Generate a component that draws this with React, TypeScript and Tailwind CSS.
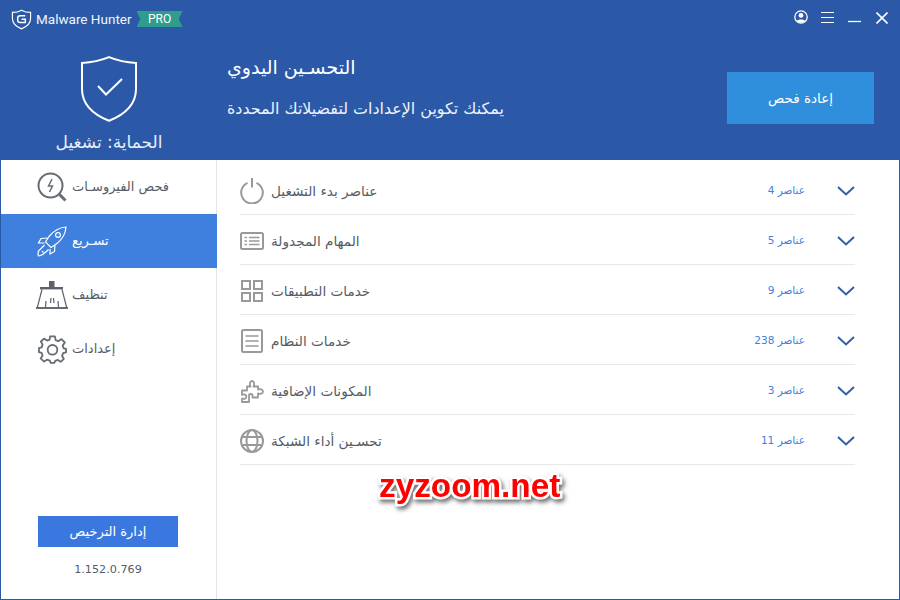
const AR = "font-['DejaVu_Sans',Tahoma,sans-serif]";

function LogoG() {
  return (
    <svg width="21" height="21" viewBox="0 0 22 22" fill="none" stroke="#fff">
      <path d="M11 1.2 C14 3 17 3.6 20.5 3.6 V10 C20.5 15 16.5 18.6 11 20.8 C5.5 18.6 1.5 15 1.5 10 V3.6 C5 3.6 8 3 11 1.2 Z" strokeWidth="1.2" />
      <path d="M15 7 H9.5 C8 7 7 8 7 9.4 V11.8 C7 13.2 8 14.2 9.5 14.2 H15 V10.8 H11" strokeWidth="1.5" />
    </svg>
  );
}

function Shield() {
  return (
    <svg width="56" height="66" viewBox="0 0 56 66" fill="none" stroke="#fff" strokeWidth="2">
      <path d="M28 1.2 C36 4.5 45 6.5 55 7 V33 C55 47 45 58 28 64.8 C11 58 1 47 1 33 V7 C11 6.5 20 4.5 28 1.2 Z" />
      <path d="M17 30 L25 38.5 L41 23" />
    </svg>
  );
}

function ScanIcon() {
  return (
    <svg width="30" height="30" viewBox="0 0 30 30" fill="none" stroke="#666d75" strokeWidth="2">
      <circle cx="13.5" cy="13.5" r="12" />
      <path d="M22.5 22.5 L28.5 28.5" strokeWidth="3" />
      <path d="M15 7 L11.5 14 H15.5 L12.5 20" strokeWidth="1.5" />
    </svg>
  );
}

function RocketIcon() {
  return (
    <svg width="30" height="31" viewBox="0 0 30 31" fill="none" stroke="#fff" strokeWidth="1.2">
      <path d="M29 1 C22 1.5 16.5 5 12 10.5 L8.5 16 L14 21.5 L20 17.5 C25.5 13 28.5 8 29 1 Z" />
      <circle cx="21" cy="9" r="2.4" />
      <path d="M10.5 12 L4 12.5 L1.5 17 L7.5 17" />
      <path d="M18 19.5 L17.5 25.5 L13 28 L13 23" />
      <path d="M7.5 19 L1.5 25 C1 27 1 29 1.5 30 C4 30 6 29 11.5 23.5" />
      <path d="M5 25 L6.5 26.5" />
    </svg>
  );
}

function BroomIcon() {
  return (
    <svg width="32" height="28" viewBox="0 0 32 28" fill="none" stroke="#5b626a">
      <rect x="13" y="0" width="5.5" height="7" fill="#5b626a" stroke="none" />
      <rect x="4" y="6" width="23" height="2.4" fill="#5b626a" stroke="none" />
      <path d="M6 8.5 L1.2 27 H30.8 L26 8.5" strokeWidth="1.2" />
      <path d="M0 27 H32" strokeWidth="1.8" />
      <path d="M10 20 L9.5 26 M15 17 L14.5 22 M17.5 17 L18 22 M22 20 L22.5 26" strokeWidth="1.2" />
    </svg>
  );
}

function GearIcon() {
  return (
    <svg width="29" height="29" viewBox="0 0 24 24" fill="none" stroke="#666d75" strokeWidth="1.5" strokeLinejoin="round">
      <path d="M10 1.2 H14 L14.6 4.3 L16.8 5.2 L19.4 3.4 L22.2 6.2 L20.4 8.8 L21.3 11 L23.2 11.5 V14.3 L20.8 15 L19.9 17.2 L21.4 19.8 L18.8 22.2 L16.4 20.6 L14.2 21.4 L13.6 23 H10.4 L9.8 21.2 L7.4 20.4 L5 22 L2.2 19.4 L3.8 17 L3 14.8 L0.8 14.2 V10.8 L3 10.2 L3.8 8 L2.4 5.4 L5 3 L7.6 4.6 L9.6 3.8 Z" />
      <circle cx="12" cy="12.3" r="4" />
    </svg>
  );
}

function PowerIcon() {
  return (
    <svg width="24" height="26" viewBox="0 0 24 26" fill="none" stroke="#999" strokeWidth="2">
      <path d="M7.5 4.8 A10.8 10.8 0 1 0 16.5 4.8" />
      <path d="M12 0 V9.5" />
    </svg>
  );
}

function ListIcon() {
  return (
    <svg width="24" height="18" viewBox="0 0 24 18" fill="none" stroke="#999" strokeWidth="2">
      <rect x="1" y="1" width="22" height="16" rx="1.5" />
      <path d="M4.5 5.5 H7 M4.5 9 H7 M4.5 12.5 H7 M9 5.5 H19.5 M9 9 H19.5 M9 12.5 H19.5" strokeWidth="1.6" />
    </svg>
  );
}

function GridIcon() {
  return (
    <svg width="22" height="22" viewBox="0 0 22 22" fill="none" stroke="#999" strokeWidth="2">
      <rect x="1" y="1" width="8" height="8" />
      <rect x="13" y="1" width="8" height="8" />
      <rect x="1" y="13" width="8" height="8" />
      <rect x="13" y="13" width="8" height="8" />
    </svg>
  );
}

function DocIcon() {
  return (
    <svg width="22" height="24" viewBox="0 0 22 24" fill="none" stroke="#999" strokeWidth="2">
      <rect x="1" y="1" width="20" height="22" rx="1.5" />
      <path d="M4.5 7 H17.5 M4.5 12 H17.5 M4.5 17 H17.5" strokeWidth="1.6" />
    </svg>
  );
}

function PuzzleIcon() {
  return (
    <svg width="23" height="23" viewBox="0 0 23 23" fill="none" stroke="#999" strokeWidth="1.8" strokeLinejoin="round">
      <path d="M6 6.5 H9.5 C8.4 4.5 8.8 1 11 1 C13.2 1 13.6 4.5 12.5 6.5 H17 V9.6 C18.8 8.6 22 9.2 22 11.5 C22 13.8 18.8 14.4 17 13.4 V17.5 H11.5 V15.5 C11.5 13.5 8 13.5 8 15.5 V22 H1 V18.5 C3.4 19.4 5.4 18.6 5.4 16.6 C5.4 14.6 3.4 13.8 1 14.8 V10.5 H6 Z" />
    </svg>
  );
}

function GlobeIcon() {
  return (
    <svg width="24" height="24" viewBox="0 0 24 24" fill="none" stroke="#999" strokeWidth="2">
      <circle cx="12" cy="12" r="11" />
      <ellipse cx="12" cy="12" rx="5.5" ry="11" />
      <path d="M2.5 8 H21.5 M2.5 16 H21.5" />
    </svg>
  );
}

function Chevron() {
  return (
    <svg width="18" height="10" viewBox="0 0 18 10" fill="none" stroke="#2f5ea8" strokeWidth="2">
      <path d="M1 1 L9 8.5 L17 1" />
    </svg>
  );
}

const nav = [
  { label: "فحص الفيروسـات", icon: <ScanIcon /> },
  { label: "تسـريع", icon: <RocketIcon />, active: true },
  { label: "تنظيف", icon: <BroomIcon /> },
  { label: "إعدادات", icon: <GearIcon /> },
];

const rows = [
  { label: "عناصر بدء التشغيل", count: "عناصر 4", icon: <PowerIcon /> },
  { label: "المهام المجدولة", count: "عناصر 5", icon: <ListIcon /> },
  { label: "خدمات التطبيقات", count: "عناصر 9", icon: <GridIcon /> },
  { label: "خدمات النظام", count: "عناصر 238", icon: <DocIcon /> },
  { label: "المكونات الإضافية", count: "عناصر 3", icon: <PuzzleIcon /> },
  { label: "تحسـين أداء الشبكة", count: "عناصر 11", icon: <GlobeIcon /> },
];

export default function App() {
  return (
    <div className={`relative flex h-[600px] w-[900px] flex-col overflow-hidden border border-[#2b59a7] bg-white ${AR}`}>
      <header className="flex h-[159px] shrink-0 flex-col bg-[#2b59a7] text-white">
        <div className="flex h-[36px] shrink-0 items-center pl-[10px] pr-[11px]">
          <LogoG />
          <span className="ml-[4px] font-['Roboto',sans-serif] text-[13.5px] text-[#f0f4fb]">Malware Hunter</span>
          <span className="ml-[5px] flex h-[16px] w-[46px] items-center justify-center bg-[#2f9c8d] font-['Roboto',sans-serif] text-[12px] [clip-path:polygon(0_0,100%_0,92%_50%,100%_100%,0_100%,8%_50%)]">
            PRO
          </span>
          <div className="ml-auto flex items-center">
            <svg width="14" height="14" viewBox="0 0 14 14" fill="none" stroke="#fff" className="mb-[4px]">
              <circle cx="7" cy="7" r="6.2" strokeWidth="1.3" />
              <circle cx="7" cy="5.4" r="2.4" fill="#fff" stroke="none" />
              <path d="M2.6 11.2 C3.6 8.8 10.4 8.8 11.4 11.2 C10 13.4 4 13.4 2.6 11.2 Z" fill="#fff" stroke="none" />
            </svg>
            <svg width="13" height="12" viewBox="0 0 13 12" stroke="#fff" className="mb-[3px] ml-[13px]">
              <path d="M0 0.5 H13 M0 5.5 H13 M0 10.5 H13" />
            </svg>
            <svg width="13" height="12" viewBox="0 0 13 12" stroke="#fff" className="mb-[3px] ml-[14px]">
              <path d="M0 9.5 H13" strokeWidth="1.3" />
            </svg>
            <svg width="12" height="12" viewBox="0 0 12 12" stroke="#fff" strokeWidth="1.6" className="mb-[3px] ml-[15px]">
              <path d="M0.5 0.5 L11.5 11.5 M11.5 0.5 L0.5 11.5" />
            </svg>
          </div>
        </div>
        <div className="flex min-h-0 flex-1 items-start">
          <div className="flex w-[216px] shrink-0 flex-col items-center pt-[19px]">
            <Shield />
            <div dir="rtl" className="mt-[9px] text-[17px] leading-[22px] text-[#e8effa]">
              الحماية: تشغيل
            </div>
          </div>
          <div className="ml-[10px] flex flex-col items-start pt-[17px]">
            <div dir="rtl" className="text-[19px] leading-[26px]">التحسـين اليدوي</div>
            <div dir="rtl" className="mt-[17px] text-[15.9px] leading-[24px] text-[#eef3fb]">
              يمكنك تكوين الإعدادات لتفضيلاتك المحددة
            </div>
          </div>
          <button className="ml-auto mr-[25px] mt-[35px] flex h-[52px] w-[147px] items-center justify-center bg-[#2f8fdc] text-[13.5px] text-white" dir="rtl">
            إعادة فحص
          </button>
        </div>
      </header>

      <div className="flex min-h-0 flex-1">
        <aside className="flex w-[216px] shrink-0 flex-col border-r border-[#e5e5e5]">
          <nav className="-mr-px flex flex-col">
            {nav.map((n) => (
              <div
                key={n.label}
                className={`flex h-[54px] items-center pl-[35px] ${n.active ? "bg-[#3f7fdd] text-white" : "text-[#555c66]"}`}
              >
                <span className="flex w-[32px] shrink-0 justify-center">{n.icon}</span>
                <span dir="rtl" className="ml-[4px] text-[13px]">{n.label}</span>
              </div>
            ))}
          </nav>
          <div className="mt-auto flex flex-col items-center pb-[20px] pr-px">
            <button dir="rtl" className="h-[31px] w-[140px] bg-[#3a78e0] text-[13px] text-white">
              إدارة الترخيص
            </button>
            <div className="mt-[14px] text-[11.2px] leading-[18px] text-[#555c66]">1.152.0.769</div>
          </div>
        </aside>

        <main className="flex-1 pl-[23px] pr-[44px] pt-[5px]">
          {rows.map((r) => (
            <div key={r.label} className="flex h-[50px] items-center border-b border-[#e8e8e8] pt-[3px]">
              <span className="flex w-[24px] shrink-0 justify-center">{r.icon}</span>
              <span dir="rtl" className="ml-[7px] text-[13.6px] text-[#555c66]">{r.label}</span>
              <span dir="rtl" className="ml-auto text-[10.5px] text-[#3f7fdd]">{r.count}</span>
              <span className="ml-[32px] flex"><Chevron /></span>
            </div>
          ))}
        </main>
      </div>

      <div className="absolute left-[378px] top-[465px] font-['Liberation_Sans',sans-serif] text-[33.3px] font-bold leading-[40px] text-[#ff0000] [paint-order:stroke_fill] [-webkit-text-stroke:5px_#fff] [filter:drop-shadow(2px_3px_2px_rgba(0,0,0,0.55))]">
        zyzoom.net
      </div>
    </div>
  );
}
